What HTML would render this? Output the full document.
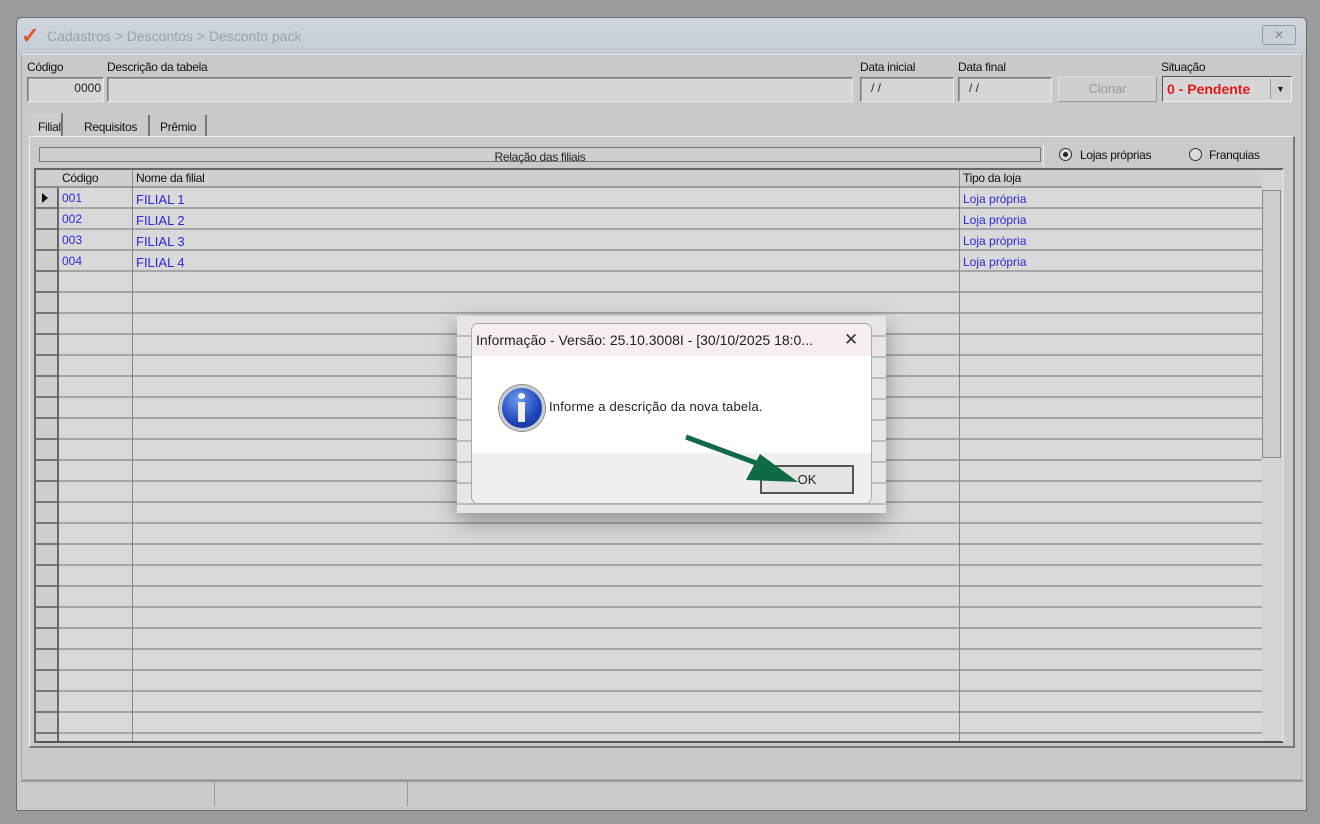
<!DOCTYPE html>
<html><head><meta charset="utf-8"><style>
*{margin:0;padding:0;box-sizing:border-box}
body{width:1320px;height:824px;background:#9b9b9b;position:relative;overflow:hidden;font-family:"Liberation Sans",sans-serif;font-size:12px;color:#222}
.a{position:absolute}
.lbl{position:absolute;font-size:12px;color:#111;letter-spacing:-0.3px}
.inp{position:absolute;background:#d6d6d6;border:1px solid #7a7a7a;border-right-color:#e8e8e8;border-bottom-color:#e8e8e8;box-shadow:inset 1px 1px 0 #a0a0a0}
.blue{color:#2a2ad8}
</style></head><body>
<div class="a" style="left:16px;top:17px;width:1291px;height:794px;background:#c9c9c9;border:1px solid #6e6e6e;border-radius:6px 6px 0 0"></div>
<div class="a" style="left:17px;top:18px;width:1289px;height:36px;background:linear-gradient(#cfd6de,#c4ccd5);border-radius:5px 5px 0 0"></div>
<div class="a" style="left:21px;top:26px;font-size:22px;color:#e0572a;font-weight:bold;line-height:20px">✓</div>
<div class="a" style="left:47px;top:28px;font-size:14px;color:#9aa3ab">Cadastros &gt; Descontos &gt; Desconto pack</div>
<div class="a" style="left:1262px;top:25px;width:34px;height:20px;border:1px solid #8d9aab;border-radius:3px;background:#c9d0d8;color:#888;text-align:center;font-size:12px;line-height:18px">✕</div>
<div class="a" style="left:21px;top:54px;width:1281px;height:726px;border:1px solid #aaa;border-top-color:#e8e8e8"></div>

<div class="lbl" style="left:27px;top:60px">Código</div>
<div class="lbl" style="left:107px;top:60px">Descrição da tabela</div>
<div class="inp" style="left:27px;top:77px;width:77px;height:25px;text-align:right;padding:3px 2px 0 0">0000</div>
<div class="inp" style="left:107px;top:77px;width:746px;height:25px"></div>
<div class="lbl" style="left:860px;top:60px">Data inicial</div>
<div class="lbl" style="left:958px;top:60px">Data final</div>
<div class="inp" style="left:860px;top:77px;width:94px;height:25px;padding:3px 0 0 10px">/ /</div>
<div class="inp" style="left:958px;top:77px;width:94px;height:25px;padding:3px 0 0 10px">/ /</div>
<div class="a" style="left:1058px;top:76px;width:99px;height:26px;background:#cfcfcf;border:1px solid #e0e0e0;border-right-color:#999;border-bottom-color:#999;color:#999;text-align:center;line-height:24px;font-size:13px">Clonar</div>
<div class="lbl" style="left:1161px;top:60px">Situação</div>
<div class="a" style="left:1162px;top:76px;width:130px;height:26px;background:#d6d6d6;border:1px solid #555;border-right-color:#eee;border-bottom-color:#eee"></div>
<div class="a" style="left:1167px;top:81px;color:#e81818;font-weight:bold;font-size:14px">0 - Pendente</div>
<div class="a" style="left:1270px;top:79px;width:20px;height:20px;background:#d0d0d0;border-left:1px solid #999;font-size:9px;text-align:center;line-height:20px">▼</div>

<div class="a" style="left:31px;top:113px;width:32px;height:24px;background:#cfcfcf;border-right:2px solid #777"></div>
<div class="lbl" style="left:38px;top:120px">Filial</div>
<div class="lbl" style="left:84px;top:120px">Requisitos</div>
<div class="a" style="left:148px;top:115px;width:2px;height:22px;background:#777"></div>
<div class="lbl" style="left:160px;top:120px">Prêmio</div>
<div class="a" style="left:205px;top:115px;width:2px;height:22px;background:#777"></div>
<div class="a" style="left:29px;top:136px;width:1266px;height:612px;border:1px solid #eee;border-right:2px solid #777;border-bottom:2px solid #777;background:#cacaca"></div>

<div class="a" style="left:39px;top:147px;width:1002px;height:15px;border:1px solid #777;background:#cfcfcf;text-align:center;font-size:12px;line-height:18px;letter-spacing:-0.3px">Relação das filiais</div>
<div class="a" style="left:1043px;top:143px;width:1px;height:24px;background:#eee"></div>
<div class="a" style="left:1059px;top:148px;width:13px;height:13px;border:1px solid #333;border-radius:50%;background:#ddd"></div>
<div class="a" style="left:1063px;top:152px;width:5px;height:5px;border-radius:50%;background:#222"></div>
<div class="lbl" style="left:1080px;top:148px">Lojas próprias</div>
<div class="a" style="left:1189px;top:148px;width:13px;height:13px;border:1px solid #333;border-radius:50%;background:#ddd"></div>
<div class="lbl" style="left:1209px;top:148px">Franquias</div>

<div class="a" style="left:34px;top:168px;width:1250px;height:575px;border:2px solid #666;border-right-color:#ddd;border-bottom-color:#555;background:#d9d9d9"></div>
<div class="a" style="left:36px;top:170px;width:1226px;height:18px;background:#cfcfcf;border-bottom:2px solid #999"></div>
<div class="a" style="left:36px;top:188px;width:1226px;height:553px;background:repeating-linear-gradient(#d9d9d9 0,#d9d9d9 19px,#a5a5a5 19px,#a5a5a5 21px)"></div>
<div class="a" style="left:36px;top:170px;width:23px;height:571px;background:repeating-linear-gradient(#cfcfcf 0,#cfcfcf 19px,#777 19px,#777 21px);background-position:0 18px;border-right:2px solid #666"></div>
<div class="a" style="left:36px;top:170px;width:23px;height:18px;background:#cfcfcf;border-bottom:2px solid #888"></div>
<div class="a" style="left:132px;top:170px;width:1px;height:571px;background:#888"></div>
<div class="a" style="left:959px;top:170px;width:1px;height:571px;background:#888"></div>
<div class="a" style="left:1262px;top:170px;width:20px;height:571px;background:#d4d4d4"></div>
<div class="a" style="left:1262px;top:190px;width:19px;height:268px;background:#cdcdcd;border:1px solid #888"></div>
<div class="a" style="left:42px;top:193px;width:0;height:0;border-top:5px solid transparent;border-bottom:5px solid transparent;border-left:6px solid #111"></div>

<div class="lbl" style="left:62px;top:171px">Código</div>
<div class="lbl" style="left:136px;top:171px">Nome da filial</div>
<div class="lbl" style="left:963px;top:171px">Tipo da loja</div>
<div class="a blue" style="left:62px;top:191px">001</div><div class="a blue" style="left:136px;top:192px;font-size:13px">FILIAL 1</div><div class="a blue" style="left:963px;top:192px">Loja própria</div>
<div class="a blue" style="left:62px;top:212px">002</div><div class="a blue" style="left:136px;top:213px;font-size:13px">FILIAL 2</div><div class="a blue" style="left:963px;top:213px">Loja própria</div>
<div class="a blue" style="left:62px;top:233px">003</div><div class="a blue" style="left:136px;top:234px;font-size:13px">FILIAL 3</div><div class="a blue" style="left:963px;top:234px">Loja própria</div>
<div class="a blue" style="left:62px;top:254px">004</div><div class="a blue" style="left:136px;top:255px;font-size:13px">FILIAL 4</div><div class="a blue" style="left:963px;top:255px">Loja própria</div>

<div class="a" style="left:21px;top:780px;width:1282px;height:28px;border-top:2px solid #999;background:#cbcbcb"></div>
<div class="a" style="left:214px;top:782px;width:1px;height:24px;background:#999"></div>
<div class="a" style="left:407px;top:782px;width:1px;height:24px;background:#999"></div>

<div class="a" style="left:457px;top:316px;width:429px;height:197px;background:repeating-linear-gradient(#e6e6e6 0,#e6e6e6 19px,#bdbdbd 19px,#bdbdbd 21px);box-shadow:0 8px 22px rgba(0,0,0,0.35)"></div>
<div class="a" style="left:471px;top:323px;width:401px;height:181px;background:#f0f0f0;border:1px solid #aaa;border-radius:7px;overflow:hidden">
 <div class="a" style="left:0;top:0;width:401px;height:32px;background:#f7eef2"></div>
 <div class="a" style="left:0;top:32px;width:401px;height:97px;background:#fff"></div>
 <div class="a" style="left:4px;top:8px;font-size:14px;color:#222">Informação - Versão: 25.10.3008I - [30/10/2025 18:0...</div>
 <div class="a" style="left:372px;top:6px;font-size:17px;color:#333">✕</div>
 <div class="a" style="left:27px;top:61px;width:46px;height:46px;border-radius:50%;background:radial-gradient(circle at 40% 30%,#6d9bf0,#1d45b8 60%,#122f88);border:3px solid #c8ccd4;box-shadow:0 0 0 1px #888"></div>
 <div class="a" style="left:46px;top:69px;width:7px;height:6px;border-radius:50%;background:#fff"></div>
 <div class="a" style="left:46px;top:78px;width:7px;height:20px;background:#f0f0f0"></div>
 <div class="a" style="left:77px;top:75px;font-size:13px;color:#222;letter-spacing:0.2px">Informe a descrição da nova tabela.</div>
 <div class="a" style="left:288px;top:141px;width:94px;height:29px;border:2px solid #555;background:#e4e4e4;text-align:center;line-height:25px;font-size:13px">OK</div>
</div>
<svg class="a" style="left:680px;top:430px" width="140" height="60"><line x1="6" y1="7" x2="95" y2="40" stroke="#0f6b45" stroke-width="5"/><polygon points="118,52 80,24 66,50" fill="#0f6b45"/></svg>
</body></html>
